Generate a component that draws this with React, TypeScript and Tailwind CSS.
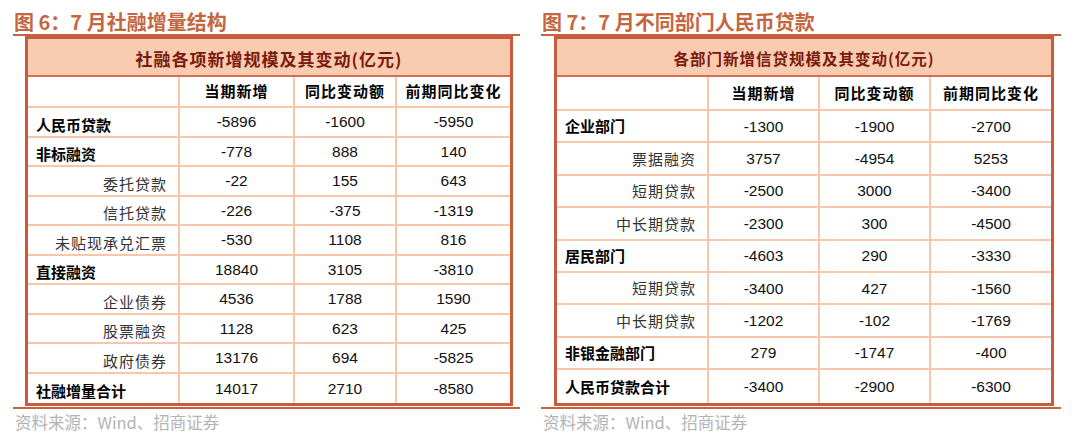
import React from 'react';

type Row = { label: string; level: 0 | 1; values: string[] };

type TableSpec = {
  title: string;
  caption: string;
  captionSize: string;
  panelWidth: string;
  boxMargin: string;
  boxWidth: string;
  cols: string;
  headRow: string;
  bodyRow: string;
  labelShift: string;
  rows: Row[];
};

const cjk = "font-['Noto_Sans_CJK_SC',sans-serif]";
const num = "font-['Liberation_Sans','Noto_Sans_CJK_SC',sans-serif]";

const socialFinancing: TableSpec = {
  title: '图 6：7 月社融增量结构',
  caption: '社融各项新增规模及其变动(亿元)',
  captionSize: 'text-[17px]',
  panelWidth: 'w-[507px]',
  boxMargin: 'ml-[12px]',
  boxWidth: 'w-[488px]',
  cols: 'grid-cols-[152px_115px_102px_1fr]',
  headRow: 'h-[31px]',
  bodyRow: 'h-[29.5px]',
  labelShift: 'pt-[6px]',
  rows: [
    { label: '人民币贷款', level: 0, values: ['-5896', '-1600', '-5950'] },
    { label: '非标融资', level: 0, values: ['-778', '888', '140'] },
    { label: '委托贷款', level: 1, values: ['-22', '155', '643'] },
    { label: '信托贷款', level: 1, values: ['-226', '-375', '-1319'] },
    { label: '未贴现承兑汇票', level: 1, values: ['-530', '1108', '816'] },
    { label: '直接融资', level: 0, values: ['18840', '3105', '-3810'] },
    { label: '企业债券', level: 1, values: ['4536', '1788', '1590'] },
    { label: '股票融资', level: 1, values: ['1128', '623', '425'] },
    { label: '政府债券', level: 1, values: ['13176', '694', '-5825'] },
    { label: '社融增量合计', level: 0, values: ['14017', '2710', '-8580'] },
  ],
};

const sectorLoans: TableSpec = {
  title: '图 7：7 月不同部门人民币贷款',
  caption: '各部门新增信贷规模及其变动(亿元)',
  captionSize: 'text-[15.5px]',
  panelWidth: 'w-[520px]',
  boxMargin: 'ml-[13px]',
  boxWidth: 'w-[500px]',
  cols: 'grid-cols-[152px_111px_111px_1fr]',
  headRow: 'h-[34px]',
  bodyRow: 'h-[32.4px]',
  labelShift: 'pt-[1px]',
  rows: [
    { label: '企业部门', level: 0, values: ['-1300', '-1900', '-2700'] },
    { label: '票据融资', level: 1, values: ['3757', '-4954', '5253'] },
    { label: '短期贷款', level: 1, values: ['-2500', '3000', '-3400'] },
    { label: '中长期贷款', level: 1, values: ['-2300', '300', '-4500'] },
    { label: '居民部门', level: 0, values: ['-4603', '290', '-3330'] },
    { label: '短期贷款', level: 1, values: ['-3400', '427', '-1560'] },
    { label: '中长期贷款', level: 1, values: ['-1202', '-102', '-1769'] },
    { label: '非银金融部门', level: 0, values: ['279', '-1747', '-400'] },
    { label: '人民币贷款合计', level: 0, values: ['-3400', '-2900', '-6300'] },
  ],
};

const headers = ['当期新增', '同比变动额', '前期同比变化'];

function DataTable({ spec }: { spec: TableSpec }) {
  const last = spec.rows.length - 1;
  return (
    <div className={`${spec.panelWidth} shrink-0`}>
      <div className="h-[34px] flex items-end pb-[2px] pl-[1px]">
        <h2 className={`${cjk} text-[20px] leading-none font-bold text-[#c4663f] whitespace-pre`}>
          {spec.title}
        </h2>
      </div>
      <div className="h-[2px] bg-[#c9603f]" />

      <div className={`${spec.boxMargin} ${spec.boxWidth} border-[3px] border-[#c85a3e] bg-white`}>
        {/* caption band */}
        <div className="h-[38px] pt-[3px] bg-[#f9cbb0] border-b-2 border-[#d66e52] flex items-center justify-center">
          <span className={`${cjk} ${spec.captionSize} font-bold text-[#7a1b0e] tracking-[1px]`}>
            {spec.caption}
          </span>
        </div>

        <div className={`grid ${spec.cols}`}>
          <div className={`${spec.headRow} border-r-2 border-b-2 border-[#f8c7a9]`} />
          {headers.map((h, i) => (
            <div
              key={h}
              className={`${spec.headRow} border-b-2 border-[#f8c7a9] ${i < 2 ? 'border-r-2' : ''} flex items-center justify-center ${cjk} text-[15px] font-bold text-black tracking-[1px]`}
            >
              {h}
            </div>
          ))}

          {spec.rows.map((row, r) => (
            <React.Fragment key={r}>
              <div
                className={`${spec.bodyRow} ${spec.labelShift} border-r-2 border-[#f8c7a9] ${r < last ? 'border-b-2' : ''} flex items-center ${cjk} text-[15px] ${
                  row.level === 0
                    ? 'justify-start pl-[8px] font-bold text-black'
                    : 'justify-end pr-[11px] font-normal text-[#333] tracking-[1px]'
                }`}
              >
                {row.label}
              </div>
              {row.values.map((v, c) => (
                <div
                  key={c}
                  className={`${spec.bodyRow} border-[#f8c7a9] ${c < 2 ? 'border-r-2' : ''} ${r < last ? 'border-b-2' : ''} flex items-center justify-center ${num} text-[15.5px] text-[#111]`}
                >
                  {v}
                </div>
              ))}
            </React.Fragment>
          ))}
        </div>
      </div>

      <div className="h-[2px] mt-[1px] bg-[#c9603f]" />
      <p className={`${cjk} mt-[5px] pl-[2px] text-[16.5px] leading-none text-[#b3b3b3]`}>
        资料来源：Wind、招商证券
      </p>
    </div>
  );
}

export default function App() {
  return (
    <div className="w-[1080px] h-[445px] bg-white overflow-hidden">
      <div className="flex gap-[21px] pl-[13px]">
        <DataTable spec={socialFinancing} />
        <DataTable spec={sectorLoans} />
      </div>
    </div>
  );
}
